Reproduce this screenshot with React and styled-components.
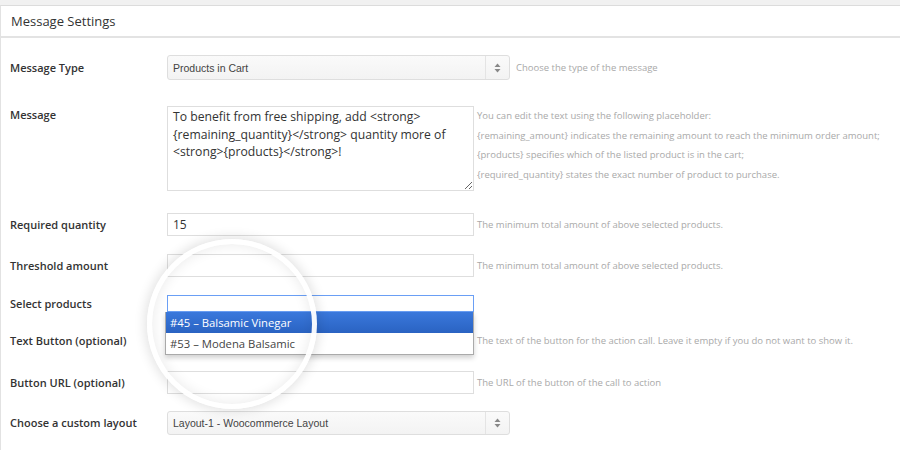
import styled, { createGlobalStyle } from "styled-components";

const GlobalStyle = createGlobalStyle`
  html, body {
    margin: 0;
    padding: 0;
    background: #f1f1f1;
    font-family: "Open Sans", "DejaVu Sans", sans-serif;
  }
  * { box-sizing: border-box; }
`;

const Page = styled.div`
  width: 900px;
  height: 450px;
  padding-top: 5px;
  overflow: hidden;
  background: #f1f1f1;
`;

const Panel = styled.section`
  position: relative;
  width: 910px;
  height: 445px;
  background: #fff;
  border-top: 1px solid #dcdcdc;
  border-left: 1px solid #e2e2e2;
`;

const PanelHeader = styled.h2`
  margin: 0;
  height: 32px;
  padding: 0 10px 1px;
  display: flex;
  align-items: center;
  font-size: 13px;
  font-weight: 400;
  color: #333;
  border-bottom: 2px solid #e3e3e3;
`;

const Form = styled.div`
  display: flex;
  flex-direction: column;
  padding-left: 9px;
`;

const Row = styled.div`
  display: flex;
  align-items: ${(p) => (p.$top ? "flex-start" : "center")};
  margin-top: ${(p) => p.$mt}px;
`;

const Label = styled.div`
  width: 157px;
  flex-shrink: 0;
  font-size: 11px;
  font-weight: 600;
  color: #333;
  line-height: 16px;
  padding-top: ${(p) => p.$pt || 0}px;
`;

const SelectBox = styled.div`
  width: 343px;
  height: ${(p) => p.$h || 25}px;
  flex-shrink: 0;
  display: flex;
  align-items: stretch;
  border: 1px solid #dedede;
  border-radius: 3px;
  background: linear-gradient(#fafafa, #f3f3f3);
`;

const SelectValue = styled.div`
  flex: 1;
  display: flex;
  align-items: center;
  padding-left: 5px;
  font-family: "Liberation Sans", Arial, sans-serif;
  font-size: 10.5px;
  color: #444;
`;

const SelectArrow = styled.div`
  width: 24px;
  border-left: 1px solid #e4e4e4;
  display: flex;
  align-items: center;
  justify-content: center;
`;

const Help = styled.div`
  margin-left: ${(p) => p.$gap || 3}px;
  font-size: 9.5px;
  color: #a9a9a9;
  white-space: nowrap;
`;

const HelpList = styled.div`
  margin-left: 3px;
  font-size: 9.5px;
  line-height: 19.5px;
  color: #a9a9a9;
  white-space: nowrap;
`;

const TextArea = styled.textarea`
  display: block;
  width: 307px;
  height: 85px;
  flex-shrink: 0;
  margin: 0;
  padding: 1px 5px;
  border: 1px solid #dedede;
  border-radius: 0;
  font-family: "Open Sans", sans-serif;
  font-size: 12.2px;
  line-height: 17.5px;
  color: #333;
  resize: both;
  outline: none;
`;

const Input = styled.input`
  display: block;
  width: 307px;
  height: ${(p) => p.$h || 23}px;
  flex-shrink: 0;
  margin: 0;
  padding: 0 5px;
  border: 1px solid ${(p) => (p.$focus ? "#6a9ff5" : "#dedede")};
  border-radius: 0;
  font-family: "Open Sans", sans-serif;
  font-size: 12px;
  color: #333;
  outline: none;
  background: #fff;
`;

const FieldWrap = styled.div`
  position: relative;
  flex-shrink: 0;
`;

const Dropdown = styled.ul`
  position: absolute;
  z-index: 3;
  top: 100%;
  left: -2px;
  width: 309px;
  margin: 0;
  padding: 0;
  list-style: none;
  background: #fff;
  border: 1px solid #aaa;
  border-top: 0;
  box-shadow: 0 3px 5px rgba(0, 0, 0, 0.18);
`;

const Option = styled.li`
  height: 21px;
  display: flex;
  align-items: center;
  padding-left: 4px;
  font-size: 11.3px;
  color: ${(p) => (p.$active ? "#fff" : "#444")};
  background: ${(p) =>
    p.$active ? "linear-gradient(#3a78dc, #2a63c2)" : "transparent"};
`;

/* magnifier lens lying over the select products field */
const Lens = styled.div`
  position: absolute;
  z-index: 4;
  left: 146px;
  top: 233px;
  width: 170px;
  height: 170px;
  border-radius: 50%;
  pointer-events: none;
  border: 5px solid rgba(255, 255, 255, 0.95);
  box-shadow: 0 0 12px 2px rgba(0, 0, 0, 0.12),
    inset 0 0 14px rgba(0, 0, 0, 0.09);
  background: radial-gradient(
    circle,
    rgba(255, 255, 255, 0) 70%,
    rgba(255, 255, 255, 0.35) 100%
  );
`;

const Updown = () => (
  <svg width="7" height="10" viewBox="0 0 7 10">
    <path d="M3.5 0.5 L6.5 4 L0.5 4 Z" fill="#888" />
    <path d="M3.5 9.5 L6.5 6 L0.5 6 Z" fill="#888" />
  </svg>
);

const App = () => {
  return (
    <Page>
      <GlobalStyle />
      <Panel>
        <PanelHeader>Message Settings</PanelHeader>
        <Form>
          <Row $mt={17}>
            <Label>Message Type</Label>
            <SelectBox>
              <SelectValue>Products in Cart</SelectValue>
              <SelectArrow>
                <Updown />
              </SelectArrow>
            </SelectBox>
            <Help $gap={6}>Choose the type of the message</Help>
          </Row>

          <Row $mt={26} $top>
            <Label $pt={1}>Message</Label>
            <TextArea
              readOnly
              defaultValue={
                "To benefit from free shipping, add <strong>{remaining_quantity}</strong> quantity more of <strong>{products}</strong>!"
              }
            />
            <HelpList>
              <div>You can edit the text using the following placeholder:</div>
              <div>
                {"{remaining_amount}"} indicates the remaining amount to reach
                the minimum order amount;
              </div>
              <div>
                {"{products}"} specifies which of the listed product is in the
                cart;
              </div>
              <div>
                {"{required_quantity}"} states the exact number of product to
                purchase.
              </div>
            </HelpList>
          </Row>

          <Row $mt={22}>
            <Label>Required quantity</Label>
            <Input readOnly defaultValue="15" />
            <Help>The minimum total amount of above selected products.</Help>
          </Row>

          <Row $mt={18}>
            <Label>Threshold amount</Label>
            <Input readOnly />
            <Help>The minimum total amount of above selected products.</Help>
          </Row>

          <Row $mt={18}>
            <Label>Select products</Label>
            <FieldWrap>
              <Input readOnly $focus $h={17} />
              <Dropdown>
                <Option $active>#45 – Balsamic Vinegar</Option>
                <Option>#53 – Modena Balsamic</Option>
              </Dropdown>
            </FieldWrap>
          </Row>

          <Row $mt={17}>
            <Label>Text Button (optional)</Label>
            <Input readOnly />
            <Help>
              The text of the button for the action call. Leave it empty if you
              do not want to show it.
            </Help>
          </Row>

          <Row $mt={19}>
            <Label>Button URL (optional)</Label>
            <Input readOnly />
            <Help>The URL of the button of the call to action</Help>
          </Row>

          <Row $mt={17}>
            <Label>Choose a custom layout</Label>
            <SelectBox $h={24}>
              <SelectValue>Layout-1 - Woocommerce Layout</SelectValue>
              <SelectArrow>
                <Updown />
              </SelectArrow>
            </SelectBox>
          </Row>
        </Form>
        <Lens />
      </Panel>
    </Page>
  );
};

export default App;
